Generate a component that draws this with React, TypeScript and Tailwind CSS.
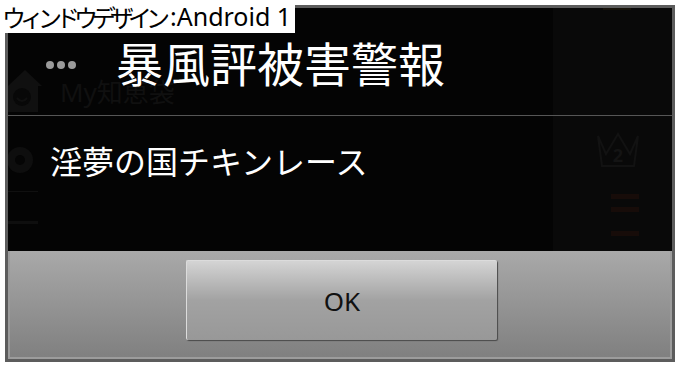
import React from "react";

export default function App() {
  return (
    <div className="relative w-[680px] h-[368px] bg-white overflow-hidden [font-family:'Noto_Sans','Noto_Sans_CJK_JP',sans-serif]">
      <div className="pt-[5px] pl-[5px]">
        <div className="w-[670px] h-[357px] border-[3px] border-[#5c5c5c] flex flex-col">
          {/* dialog body */}
          <div className="relative h-[243px] bg-[#040404] flex flex-col overflow-hidden">
            {/* faint underlying screen */}
            <div className="absolute top-0 bottom-0 left-[545px] right-0 bg-[#090909]" />
            <div className="absolute left-0 top-[56px] w-[34px] h-[50px]">
              <svg viewBox="0 0 34 50" className="w-full h-full">
                <path d="M0 22 L17 6 L34 22 L30 22 L30 48 L0 48 Z" fill="#101010" />
                <circle cx="14" cy="33" r="9" fill="#080808" />
                <path d="M9 34 Q14 40 19 34" stroke="#101010" strokeWidth="2" fill="none" />
              </svg>
            </div>
            <div className="absolute left-[52px] top-[74px] text-[26px] leading-[20px] text-[#101010] [font-family:'Noto_Sans','Noto_Sans_CJK_JP',sans-serif]">
              My知恵袋
            </div>
            <div className="absolute left-0 top-[132px] w-[28px] h-[40px]">
              <svg viewBox="0 0 28 40" className="w-full h-full">
                <circle cx="12" cy="20" r="13" fill="#0e0e0e" />
                <circle cx="12" cy="20" r="5" fill="#050505" />
              </svg>
            </div>
            <div className="absolute left-0 top-[183px] w-[30px] h-px bg-[#101010]" />
            <div className="absolute left-0 top-[213px] w-[30px] h-[3px] bg-[#0e0e0e]" />
            <div className="absolute left-[595px] top-0 w-[28px] h-[2px] bg-[#16120a]" />
            <div className="absolute left-[586px] top-[122px] w-[48px] h-[40px]">
              <svg viewBox="0 0 48 40" className="w-full h-full">
                <path d="M4 6 L12 24 L24 4 L36 24 L44 6 L40 36 L8 36 Z" fill="none" stroke="#121212" strokeWidth="2" />
                <text x="24" y="32" textAnchor="middle" fontSize="18" fontWeight="bold" fill="#141414">2</text>
              </svg>
            </div>
            <div className="absolute left-[603px] top-[186px] w-[28px] h-[5px] bg-[#170c09]" />
            <div className="absolute left-[603px] top-[199px] w-[28px] h-[5px] bg-[#170c09]" />
            <div className="absolute left-[603px] top-[223px] w-[28px] h-[5px] bg-[#170c09]" />

            {/* header */}
            <div className="relative h-[108px] flex items-center border-b border-[#565656] shrink-0">
              <div className="flex gap-[3px] ml-[38px] mt-[6px]">
                <span className="w-[8px] h-[8px] rounded-full bg-[#9a9a9a]" />
                <span className="w-[8px] h-[8px] rounded-full bg-[#9a9a9a]" />
                <span className="w-[8px] h-[8px] rounded-full bg-[#9a9a9a]" />
              </div>
              <div className="ml-[40px] text-[47px] leading-[40px] text-white [font-family:'Noto_Sans_CJK_JP',sans-serif]">
                暴風評被害警報
              </div>
            </div>
            {/* message */}
            <div className="relative pt-[28px] pl-[42px] text-[32px] leading-none text-white [font-family:'Noto_Sans_CJK_JP',sans-serif]">
              淫夢の国チキンレース
            </div>
          </div>
          {/* button bar */}
          <div className="flex-1 bg-gradient-to-b from-[#a9a9a9] to-[#808080] border-x-2 border-b-2 border-[#9c9c9c] flex justify-center pt-[9px] pl-[3px]">
            <div className="w-[311px] h-[80px] rounded-[2px] border-t border-l border-[#dcdcdc] shadow-[1px_1px_1px_#4a4a4a] bg-gradient-to-b from-[#d4d4d4] via-[#a2a2a2] to-[#989898] flex items-center justify-center">
              <span className="text-[26px] text-[#111] leading-none [font-family:'Noto_Sans',sans-serif]">OK</span>
            </div>
          </div>
        </div>
      </div>
      {/* caption label */}
      <div className="absolute top-0 left-0 h-[33px] bg-white pl-[2px] pr-[4px] flex items-center text-black text-[25px] leading-none whitespace-nowrap">
        <span className="tracking-[-6px] [font-family:'Noto_Sans_CJK_JP',sans-serif] text-[24px]">ウィンドウデザイン</span>
        <span className="ml-[6px] [font-family:'Noto_Sans',sans-serif]">:Android 1</span>
      </div>
    </div>
  );
}
